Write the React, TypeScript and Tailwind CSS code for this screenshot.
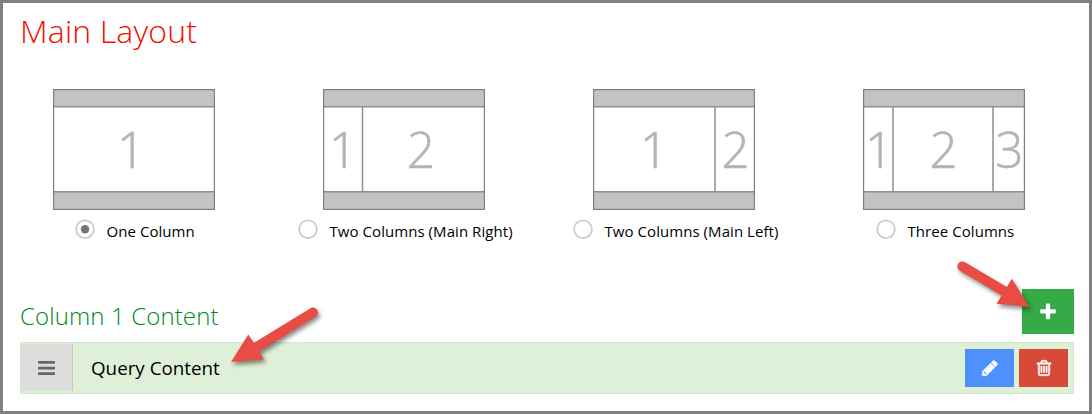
import React from "react";

type Digit = { value: string; x: number };
type Layout = {
  label: string;
  dividers: number[];
  digits: Digit[];
  optionClass: string;
  checked?: boolean;
};

const layouts: Layout[] = [
  { label: "One Column", dividers: [], digits: [{ value: "1", x: 64 }], optionClass: "ml-[22px]", checked: true },
  {
    label: "Two Columns (Main Right)",
    dividers: [39.5],
    digits: [{ value: "1", x: 6 }, { value: "2", x: 84 }],
    optionClass: "-ml-[25px]",
  },
  {
    label: "Two Columns (Main Left)",
    dividers: [122],
    digits: [{ value: "1", x: 47 }, { value: "2", x: 128.5 }],
    optionClass: "-ml-[20px]",
  },
  {
    label: "Three Columns",
    dividers: [30, 130],
    digits: [{ value: "1", x: 2 }, { value: "2", x: 66.5 }, { value: "3", x: 132.5 }],
    optionClass: "ml-[13px]",
  },
];

function Thumbnail({ dividers, digits }: { dividers: number[]; digits: Digit[] }) {
  return (
    <svg width="162" height="121" viewBox="0 0 162 121" className="block">
      <rect x="0.5" y="0.5" width="161" height="120" fill="#fff" />
      <rect x="1" y="1" width="160" height="17" fill="#c3c3c3" />
      <rect x="1" y="102" width="160" height="18" fill="#c3c3c3" />
      <path d="M1 17.75H161M1 102.75H161" stroke="#8e8e8e" strokeWidth="1.5" />
      {dividers.map((x) => (
        <path key={x} d={`M${x} 18V102`} stroke="#8e8e8e" strokeWidth="1.5" />
      ))}
      <rect x="0.6" y="0.6" width="160.8" height="119.8" fill="none" stroke="#7f7f7f" strokeWidth="1.2" />
      {digits.map((d) => (
        <text
          key={d.value}
          x={d.x}
          y="79"
          fill="#b4b4b4"
          stroke="#b4b4b4"
          strokeWidth="0.6"
          className="font-['Open_Sans'] text-[49px] font-light"
        >
          {d.value}
        </text>
      ))}
    </svg>
  );
}

function Radio({ checked }: { checked?: boolean }) {
  return (
    <svg width="20" height="20" viewBox="0 0 20 20" className="shrink-0">
      <circle cx="10" cy="10.2" r="8.9" fill="#fff" stroke="#cdcdcd" strokeWidth="1.8" />
      {checked && <circle cx="10" cy="10.2" r="4.2" fill="#777" />}
    </svg>
  );
}

function Icon({ d, size, weight = 0 }: { d: string; size: number; weight?: number }) {
  return (
    <svg width={size} height={size} viewBox="0 0 1792 1792" fill="currentColor" stroke="currentColor" strokeWidth={weight}>
      <path d={d} />
    </svg>
  );
}

const plus =
  "M1600 736v192q0 40-28 68t-68 28h-416v416q0 40-28 68t-68 28h-192q-40 0-68-28t-28-68v-416h-416q-40 0-68-28t-28-68v-192q0-40 28-68t68-28h416v-416q0-40 28-68t68-28h192q40 0 68 28t28 68v416h416q40 0 68 28t28 68z";
const pencil =
  "M491 1536l91-91-235-235-91 91v107h128v128h107zm523-928q0-22-22-22-10 0-17 7l-542 542q-7 7-7 17 0 22 22 22 10 0 17-7l542-542q7-7 7-17zm-54-192l416 416-832 832h-416v-416zm683 96q0 53-37 90l-166 166-416-416 166-165q36-38 90-38 53 0 91 38l235 234q37 39 37 91z";
const trash =
  "M704 736v576q0 14-9 23t-23 9h-64q-14 0-23-9t-9-23v-576q0-14 9-23t23-9h64q14 0 23 9t9 23zm256 0v576q0 14-9 23t-23 9h-64q-14 0-23-9t-9-23v-576q0-14 9-23t23-9h64q14 0 23 9t9 23zm256 0v576q0 14-9 23t-23 9h-64q-14 0-23-9t-9-23v-576q0-14 9-23t23-9h64q14 0 23 9t9 23zm128 724v-948h-896v948q0 22 7 40.5t14.5 27 10.5 8.5h832q3 0 10.5-8.5t14.5-27 7-40.5zm-672-1076h448l-48-117q-7-9-17-11h-317q-10 2-17 11zm928 32v64q0 14-9 23t-23 9h-96v948q0 83-47 143.5t-113 60.5h-832q-66 0-113-58.5t-47-141.5v-952h-96q-14 0-23-9t-9-23v-64q0-14 9-23t23-9h309l70-167q15-37 54-63t79-26h320q40 0 79 26t54 63l70 167h309q14 0 23 9t9 23z";

export default function App() {
  return (
    <div className="relative flex h-[414px] w-[1092px] flex-col overflow-hidden border-[3px] border-[#808080] bg-white pr-[15px] pl-[17px] font-['Open_Sans',sans-serif] text-black">
      <h1 className="mt-[6px] h-[44px] text-[32px] leading-[44px] font-light tracking-[0.15px] whitespace-nowrap text-[#f01000]">
        Main Layout
      </h1>

      <div className="mt-[36px] flex h-[154px] gap-[108px] pl-[33px]">
        {layouts.map((l) => (
          <div key={l.label} className="flex w-[162px] shrink-0 flex-col">
            <Thumbnail dividers={l.dividers} digits={l.digits} />
            <label className={`mt-[9px] flex h-5 items-center whitespace-nowrap ${l.optionClass}`}>
              <Radio checked={l.checked} />
              <span className="mt-1 ml-[11.5px] text-[15px] leading-5 tracking-[0.06px]">{l.label}</span>
            </label>
          </div>
        ))}
      </div>

      <div className="mt-[46px] flex h-[45px] items-center justify-between">
        <h2 className="mt-[9px] text-[24px] leading-[32px] font-light tracking-[0.12px] whitespace-nowrap text-[#008a17]">
          Column 1 Content
        </h2>
        <button className="flex h-[45px] w-[52px] items-center justify-center bg-[#35aa47] text-white">
          <Icon d={plus} size={20} />
        </button>
      </div>

      <div className="mt-2 flex h-[52px] items-center border border-[#d0e9c6] bg-[#dff0d8] pr-[5px]">
        <div className="mt-px mb-0.5 flex w-[52px] items-center justify-center self-stretch border-r border-[#c8c8c8] bg-[#dddddd]">
          <svg width="17" height="14" viewBox="0 0 17 14" fill="#666">
            <rect width="17" height="2.7" rx="0.6" />
            <rect y="5.7" width="17" height="2.7" rx="0.6" />
            <rect y="11.3" width="17" height="2.7" rx="0.6" />
          </svg>
        </div>
        <span className="ml-[18px] text-[18.8px] leading-6 whitespace-nowrap">Query Content</span>
        <div className="ml-auto flex gap-[5px] text-white">
          <button className="flex h-[38px] w-[49px] items-center justify-center bg-[#4d90fe]">
            <Icon d={pencil} size={18} weight={50} />
          </button>
          <button className="flex h-[38px] w-[49px] items-center justify-center bg-[#d84a38]">
            <Icon d={trash} size={18} weight={50} />
          </button>
        </div>
      </div>

      <svg
        width="1092"
        height="414"
        viewBox="0 0 1092 414"
        className="pointer-events-none absolute -top-[3px] -left-[3px] drop-shadow-[2px_3px_2px_rgba(0,0,0,0.45)]"
        fill="#e84c44"
      >
        <path d="M231 362L248.3 334.5L253.7 343L310 308.5A4.9 4.9 0 0 1 315.8 316.5L259.3 351.5L264 359.5Z" />
        <path d="M1029.5 307L1011.8 278.8L1006.8 287L965 262.3A4.9 4.9 0 0 0 959.5 270.5L1001.7 295.5L996.5 303.8Z" />
      </svg>
    </div>
  );
}
